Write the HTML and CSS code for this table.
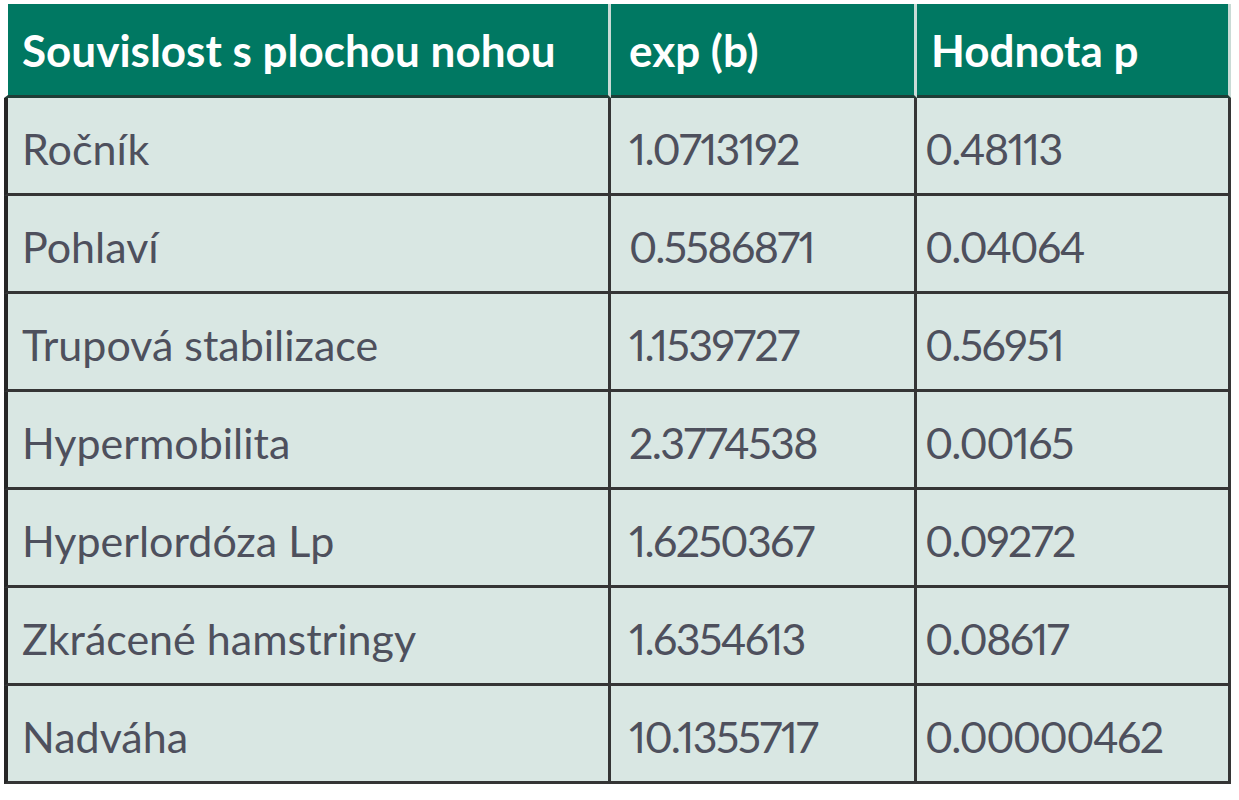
FILE: index.html
```html
<!DOCTYPE html>
<html lang="cs">
<head>
<meta charset="utf-8">
<title>Souvislost s plochou nohou</title>
<link rel="stylesheet" href="styles.css">
</head>
<body>
<table class="tbl">
  <thead>
    <tr>
      <th class="c1">Souvislost s plochou nohou</th>
      <th class="c2">exp (b)</th>
      <th class="c3">Hodnota p</th>
    </tr>
  </thead>
  <tbody>
    <tr><td class="c1">Ročník</td><td class="c2">1.0713192</td><td class="c3">0.48113</td></tr>
    <tr><td class="c1">Pohlaví</td><td class="c2">0.5586871</td><td class="c3">0.04064</td></tr>
    <tr><td class="c1">Trupová stabilizace</td><td class="c2">1.1539727</td><td class="c3">0.56951</td></tr>
    <tr><td class="c1">Hypermobilita</td><td class="c2">2.3774538</td><td class="c3">0.00165</td></tr>
    <tr><td class="c1">Hyperlordóza Lp</td><td class="c2">1.6250367</td><td class="c3">0.09272</td></tr>
    <tr><td class="c1">Zkrácené hamstringy</td><td class="c2">1.6354613</td><td class="c3">0.08617</td></tr>
    <tr><td class="c1">Nadváha</td><td class="c2">10.1355717</td><td class="c3">0.00000462</td></tr>
  </tbody>
</table>
</body>
</html>
```
FILE: styles.css
```css
html, body {
  margin: 0;
  padding: 0;
  background: #ffffff;
}

.tbl {
  border-collapse: separate;
  border-spacing: 0;
  margin: 4px 0 0 4px;
  font-family: Lato, "Liberation Sans", Arial, sans-serif;
  font-variant-numeric: proportional-nums;
  table-layout: fixed;
}

.tbl th,
.tbl td {
  text-align: left;
  vertical-align: middle;
  white-space: nowrap;
  padding: 0 0 0 14px;
  background-clip: padding-box;
}

.tbl th {
  background-color: #007862;
  color: #ffffff;
  font-weight: 700;
  font-size: 44px;
  height: 91px;
  border-bottom: 3px solid #1f3d36;
  border-right: 3px solid #c9dbd6;
}

.tbl th.c1 {
  border-left: 4px solid #ffffff;
}

.tbl td {
  background-color: #d9e7e3;
  color: #4e505d;
  font-size: 43px;
  height: 89px;
  border-bottom: 3px solid #353535;
  border-right: 3px solid #353535;
  padding-top: 6px;
}

.tbl td.c1 {
  border-left: 4px solid #262626;
}

.tbl td.c2,
.tbl td.c3 {
  letter-spacing: -1.6px;
}

.tbl .c1 { width: 586px; }
.tbl .c2 { width: 285px; padding-left: 18px; }
.tbl .c3 { width: 303px; padding-left: 8px; }
.tbl th.c3 { padding-left: 14px; width: 297px; }
```
